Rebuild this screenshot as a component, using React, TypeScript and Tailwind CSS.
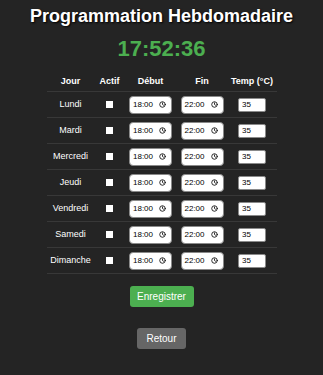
const days = ["Lundi", "Mardi", "Mercredi", "Jeudi", "Vendredi", "Samedi", "Dimanche"];

const cols = "grid grid-cols-[48px_30px_52px_51px_49px] items-center";

function TimeField({ value }: { value: string }) {
  return (
    <div className="w-[43px] h-[18px] bg-white text-black text-[8px] rounded-[4px] border border-[#8a8a8a] flex items-center justify-between pl-[3px] pr-[5px]">
      <span>{value}</span>
      <svg width="7" height="7" viewBox="0 0 24 24" fill="none" stroke="#111" strokeWidth="3" strokeLinecap="round">
        <circle cx="12" cy="12" r="9.5" />
        <path d="M12 6.5v5.5l3.5 2.5" />
      </svg>
    </div>
  );
}

export default function App() {
  return (
    <div className="min-h-[375px] bg-[#242424] text-white font-['Liberation_Sans',Arial,sans-serif] flex flex-col items-center pt-[5px]">
      <h1 className="text-[18px] leading-[23px] font-bold [text-shadow:1px_1px_2px_#000]">
        Programmation Hebdomadaire
      </h1>
      <div className="mt-[8px] text-[22px] leading-[26px] font-bold text-[#4caf50]">17:52:36</div>

      <div className="mt-[11px] w-[230px]">
        <div className={`${cols} h-[19px] border-b border-[#383838] text-[9px] font-bold text-center`}>
          <span>Jour</span>
          <span>Actif</span>
          <span>Début</span>
          <span>Fin</span>
          <span>Temp (°C)</span>
        </div>
        {days.map((d) => (
          <div key={d} className={`${cols} h-[26px] border-b border-[#383838] text-[9px] text-center`}>
            <span>{d}</span>
            <div className="flex justify-center">
              <input type="checkbox" className="appearance-none w-[7px] h-[7px] bg-white rounded-none" />
            </div>
            <div className="flex justify-center">
              <TimeField value="18:00" />
            </div>
            <div className="flex justify-center">
              <TimeField value="22:00" />
            </div>
            <div className="flex justify-center">
              <input
                type="text"
                defaultValue="35"
                className="w-[28px] h-[14px] bg-white text-black text-[8px] rounded-[2px] border border-[#8a8a8a] px-[3px]"
              />
            </div>
          </div>
        ))}
      </div>

      <button className="mt-[12px] w-[64px] h-[21px] bg-[#4caf50] rounded-[3px] text-[10px] text-white">
        Enregistrer
      </button>
      <button className="mt-[21px] w-[49px] h-[21px] bg-[#666666] rounded-[3px] text-[10px] text-white">
        Retour
      </button>
    </div>
  );
}
